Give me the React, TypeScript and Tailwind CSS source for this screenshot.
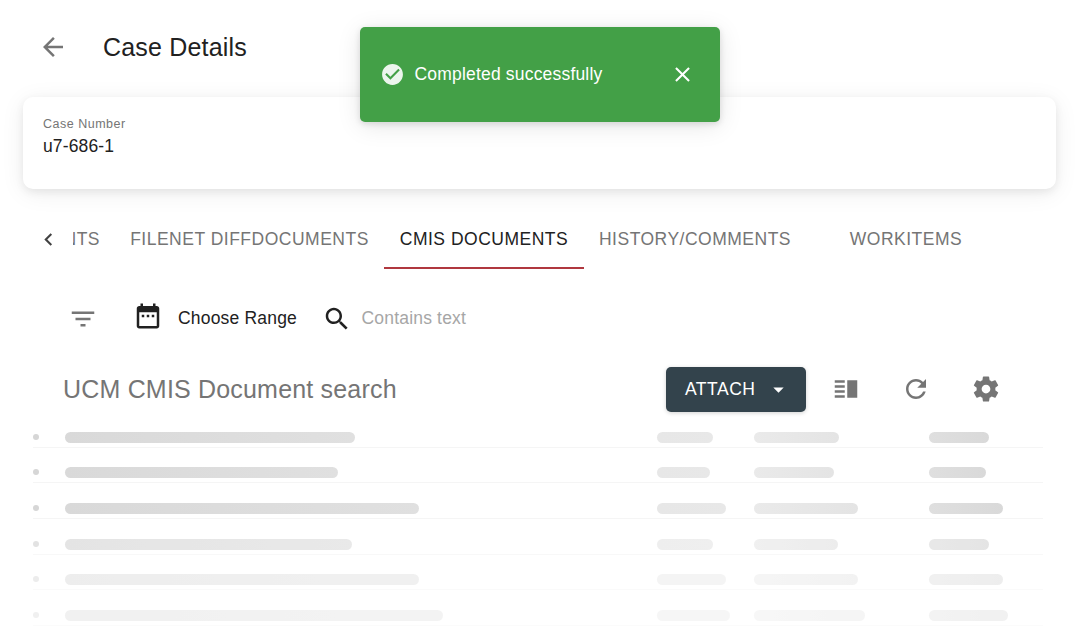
import React from "react";

const ICONS = {
  back: "M20 11H7.83l5.59-5.59L12 4l-8 8 8 8 1.41-1.41L7.83 13H20v-2z",
  check:
    "M12 2C6.48 2 2 6.48 2 12s4.48 10 10 10 10-4.48 10-10S17.52 2 12 2zm-2 15l-5-5 1.41-1.41L10 14.17l7.59-7.59L19 8l-9 9z",
  close:
    "M19 6.41L17.59 5 12 10.59 6.41 5 5 6.41 10.59 12 5 17.59 6.41 19 12 13.41 17.59 19 19 17.59 13.41 12z",
  chevronLeft: "M15.41 16.59L10.83 12l4.58-4.59L14 6l-6 6 6 6 1.41-1.41z",
  filter: "M10 18h4v-2h-4v2zM3 6v2h18V6H3zm3 7h12v-2H6v2z",
  calendar:
    "M9 11H7v2h2v-2zm4 0h-2v2h2v-2zm4 0h-2v2h2v-2zm2-7h-1V2h-2v2H8V2H6v2H5c-1.11 0-1.99.9-1.99 2L3 20c0 1.1.89 2 2 2h14c1.1 0 2-.9 2-2V6c0-1.1-.9-2-2-2zm0 16H5V9h14v11z",
  search:
    "M15.5 14h-.79l-.28-.27C15.41 12.59 16 11.11 16 9.5 16 5.91 13.09 3 9.5 3S3 5.91 3 9.5 5.91 16 9.5 16c1.61 0 3.09-.59 4.23-1.57l.27.28v.79l5 4.99L20.49 19l-4.99-5zm-6 0C7.01 14 5 11.99 5 9.5S7.01 5 9.5 5 14 7.01 14 9.5 11.99 14 9.5 14z",
  dropDown: "M7 10l5 5 5-5z",
  split: "M3 15h8v-2H3v2zm0 4h8v-2H3v2zm0-8h8V9H3v2zm0-6v2h8V5H3zm10 0h8v14h-8V5z",
  refresh:
    "M17.65 6.35C16.2 4.9 14.21 4 12 4c-4.42 0-7.99 3.58-7.99 8s3.57 8 7.99 8c3.73 0 6.84-2.55 7.73-6h-2.08c-.82 2.33-3.04 4-5.65 4-3.31 0-6-2.69-6-6s2.69-6 6-6c1.66 0 3.14.69 4.22 1.78L13 11h7V4l-2.35 2.35z",
  settings:
    "M19.43 12.98c.04-.32.07-.64.07-.98s-.03-.66-.07-.98l2.11-1.65c.19-.15.24-.42.12-.64l-2-3.46c-.12-.22-.39-.3-.61-.22l-2.49 1c-.52-.4-1.08-.73-1.69-.98l-.38-2.65C14.46 2.18 14.25 2 14 2h-4c-.25 0-.46.18-.49.42l-.38 2.65c-.61.25-1.17.59-1.69.98l-2.49-1c-.23-.09-.49 0-.61.22l-2 3.46c-.13.22-.07.49.12.64l2.11 1.65c-.04.32-.07.65-.07.98s.03.66.07.98l-2.11 1.65c-.19.15-.24.42-.12.64l2 3.46c.12.22.39.3.61.22l2.49-1c.52.4 1.08.73 1.69.98l.38 2.65c.03.24.24.42.49.42h4c.25 0 .46-.18.49-.42l.38-2.65c.61-.25 1.17-.59 1.69-.98l2.49 1c.23.09.49 0 .61-.22l2-3.46c.12-.22.07-.49-.12-.64l-2.11-1.65zM12 15.5c-1.93 0-3.5-1.57-3.5-3.5s1.57-3.5 3.5-3.5 3.5 1.57 3.5 3.5-1.57 3.5-3.5 3.5z",
};

function Icon({ name, className = "" }: { name: keyof typeof ICONS; className?: string }) {
  return (
    <svg viewBox="0 0 24 24" fill="currentColor" aria-hidden="true" className={`shrink-0 ${className}`}>
      <path d={ICONS[name]} />
    </svg>
  );
}

const TABS = [
  { label: "FILENET DIFFDOCUMENTS", width: "w-[269px]", active: false },
  { label: "CMIS DOCUMENTS", width: "w-[200px]", active: true },
  { label: "HISTORY/COMMENTS", width: "w-[222px]", active: false },
  { label: "WORKITEMS", width: "w-[200px]", active: false },
];

const ROWS = [
  { height: 35.2, opacity: 1, widths: [290, 56.5, 84.5, 60] },
  { height: 35.2, opacity: 1, widths: [272.5, 53, 79.5, 56.5] },
  { height: 36, opacity: 1, widths: [354, 69, 103.5, 73.5] },
  { height: 36, opacity: 0.69, widths: [286.5, 56, 83.5, 59.3] },
  { height: 35, opacity: 0.45, widths: [354, 69, 103.5, 73.5] },
  { height: 36, opacity: 0.36, widths: [377.5, 73.5, 110.3, 78.3] },
];

const BAR_COLORS = [
  "from-[#d9d9d9] to-[#e0e0e0]",
  "from-[#e7e7e7] to-[#e8e8e8]",
  "from-[#eaeaea] to-[#e4e4e4]",
  "from-[#dfdfdf] to-[#d9d9d9]",
];

function Toast() {
  return (
    <div className="absolute left-[360px] top-[27px] flex h-[95px] w-[360px] items-center rounded-[5px] bg-[#43a047] pl-5 pr-[25px] text-white shadow-[0_2px_6px_rgba(0,0,0,0.12),0_4px_24px_rgba(0,0,0,0.1)]">
      <Icon name="check" className="size-[25px] opacity-90" />
      <span className="ml-[9.5px] grow whitespace-nowrap tracking-[0.1875px]">Completed successfully</span>
      <Icon name="close" className="size-[25px]" />
    </div>
  );
}

export default function App() {
  return (
    <div className="relative flex h-[631px] w-[1080px] flex-col overflow-hidden bg-white font-['Liberation_Sans',Arial,sans-serif] text-[17.5px] leading-[25px] text-[#212121]">
      <header className="flex h-[97px] shrink-0 items-start pl-[38px] pt-8">
        <Icon name="back" className="size-[30px] text-[#757575]" />
        <h1 className="ml-[35px] text-[25px] leading-[31px] tracking-[0.1875px]">Case Details</h1>
      </header>

      <section className="ml-[23px] h-[92px] w-[1033px] shrink-0 rounded-[10px] bg-white pl-5 pt-[18px] shadow-[0_3px_8px_rgba(0,0,0,0.07),0_4px_24px_rgba(0,0,0,0.07)]">
        <div className="text-[12.5px] leading-[19px] tracking-[0.5px] text-[#757575]">Case Number</div>
        <div className="leading-6 tracking-[0.13px]">u7-686-1</div>
      </section>

      <nav className="mt-5 flex h-[60px] shrink-0 tracking-[0.5px] text-[#757575]">
        <div className="flex w-[73px] items-center pl-[36px]">
          <Icon name="chevronLeft" className="size-[25px] text-[#424242]" />
        </div>
        <div className="flex w-[42px] items-center justify-end overflow-hidden pr-[15px]">NTS</div>
        {TABS.map((tab) => (
          <div
            key={tab.label}
            className={`flex shrink-0 items-center justify-center whitespace-nowrap ${tab.width} ${
              tab.active ? "text-[#212121] shadow-[inset_0_-2px_0_#b0383f]" : ""
            }`}
          >
            {tab.label}
          </div>
        ))}
      </nav>

      <div className="flex h-[98px] shrink-0 items-center pl-[68px]">
        <Icon name="filter" className="mt-px size-[30px] text-[#757575]" />
        <Icon name="calendar" className="mb-1 ml-[35px] size-[30px]" />
        <span className="ml-[15px] mt-px w-[144px] whitespace-nowrap tracking-[0.1875px]">Choose Range</span>
        <Icon name="search" className="mt-[2px] size-[30px]" />
        <span className="ml-[9.5px] whitespace-nowrap tracking-[0.1875px] text-[#a6a6a6]">Contains text</span>
      </div>

      <div className="flex h-[45px] shrink-0 items-center pl-[63px] text-[#757575]">
        <h2 className="w-[603px] text-[25px] leading-[31px] tracking-[0.1875px]">UCM CMIS Document search</h2>
        <button className="flex h-[45px] w-[140px] items-center rounded-[5px] bg-[#33434c] pl-[19px] tracking-[0.5px] text-white shadow-[0_1px_4px_rgba(0,0,0,0.18)]">
          ATTACH
          <Icon name="dropDown" className="ml-[10.5px] size-[25px]" />
        </button>
        <Icon name="split" className="mb-px ml-[25px] size-[30px]" />
        <Icon name="refresh" className="mb-px ml-10 size-[30px]" />
        <Icon name="settings" className="mb-px ml-10 size-[30px]" />
      </div>

      <div className="ml-[33px] mt-[0.8px] flex w-[1010px] flex-col">
        {ROWS.map((row, index) => (
          <div
            key={index}
            className="flex items-end border-b border-[#f5f5f5] pb-1"
            style={{ height: row.height, opacity: row.opacity }}
          >
            <div className="mb-[3.3px] mr-[26.3px] size-[6px] shrink-0 rounded-full bg-[#d6d6d6]" />
            <div className="grid grid-cols-[591.5px_97.5px_175px_100px]">
              {row.widths.map((width, column) => (
                <div
                  key={column}
                  className={`h-[11.3px] rounded-full bg-linear-to-r ${BAR_COLORS[column]}`}
                  style={{ width }}
                />
              ))}
            </div>
          </div>
        ))}
      </div>

      <Toast />
    </div>
  );
}
